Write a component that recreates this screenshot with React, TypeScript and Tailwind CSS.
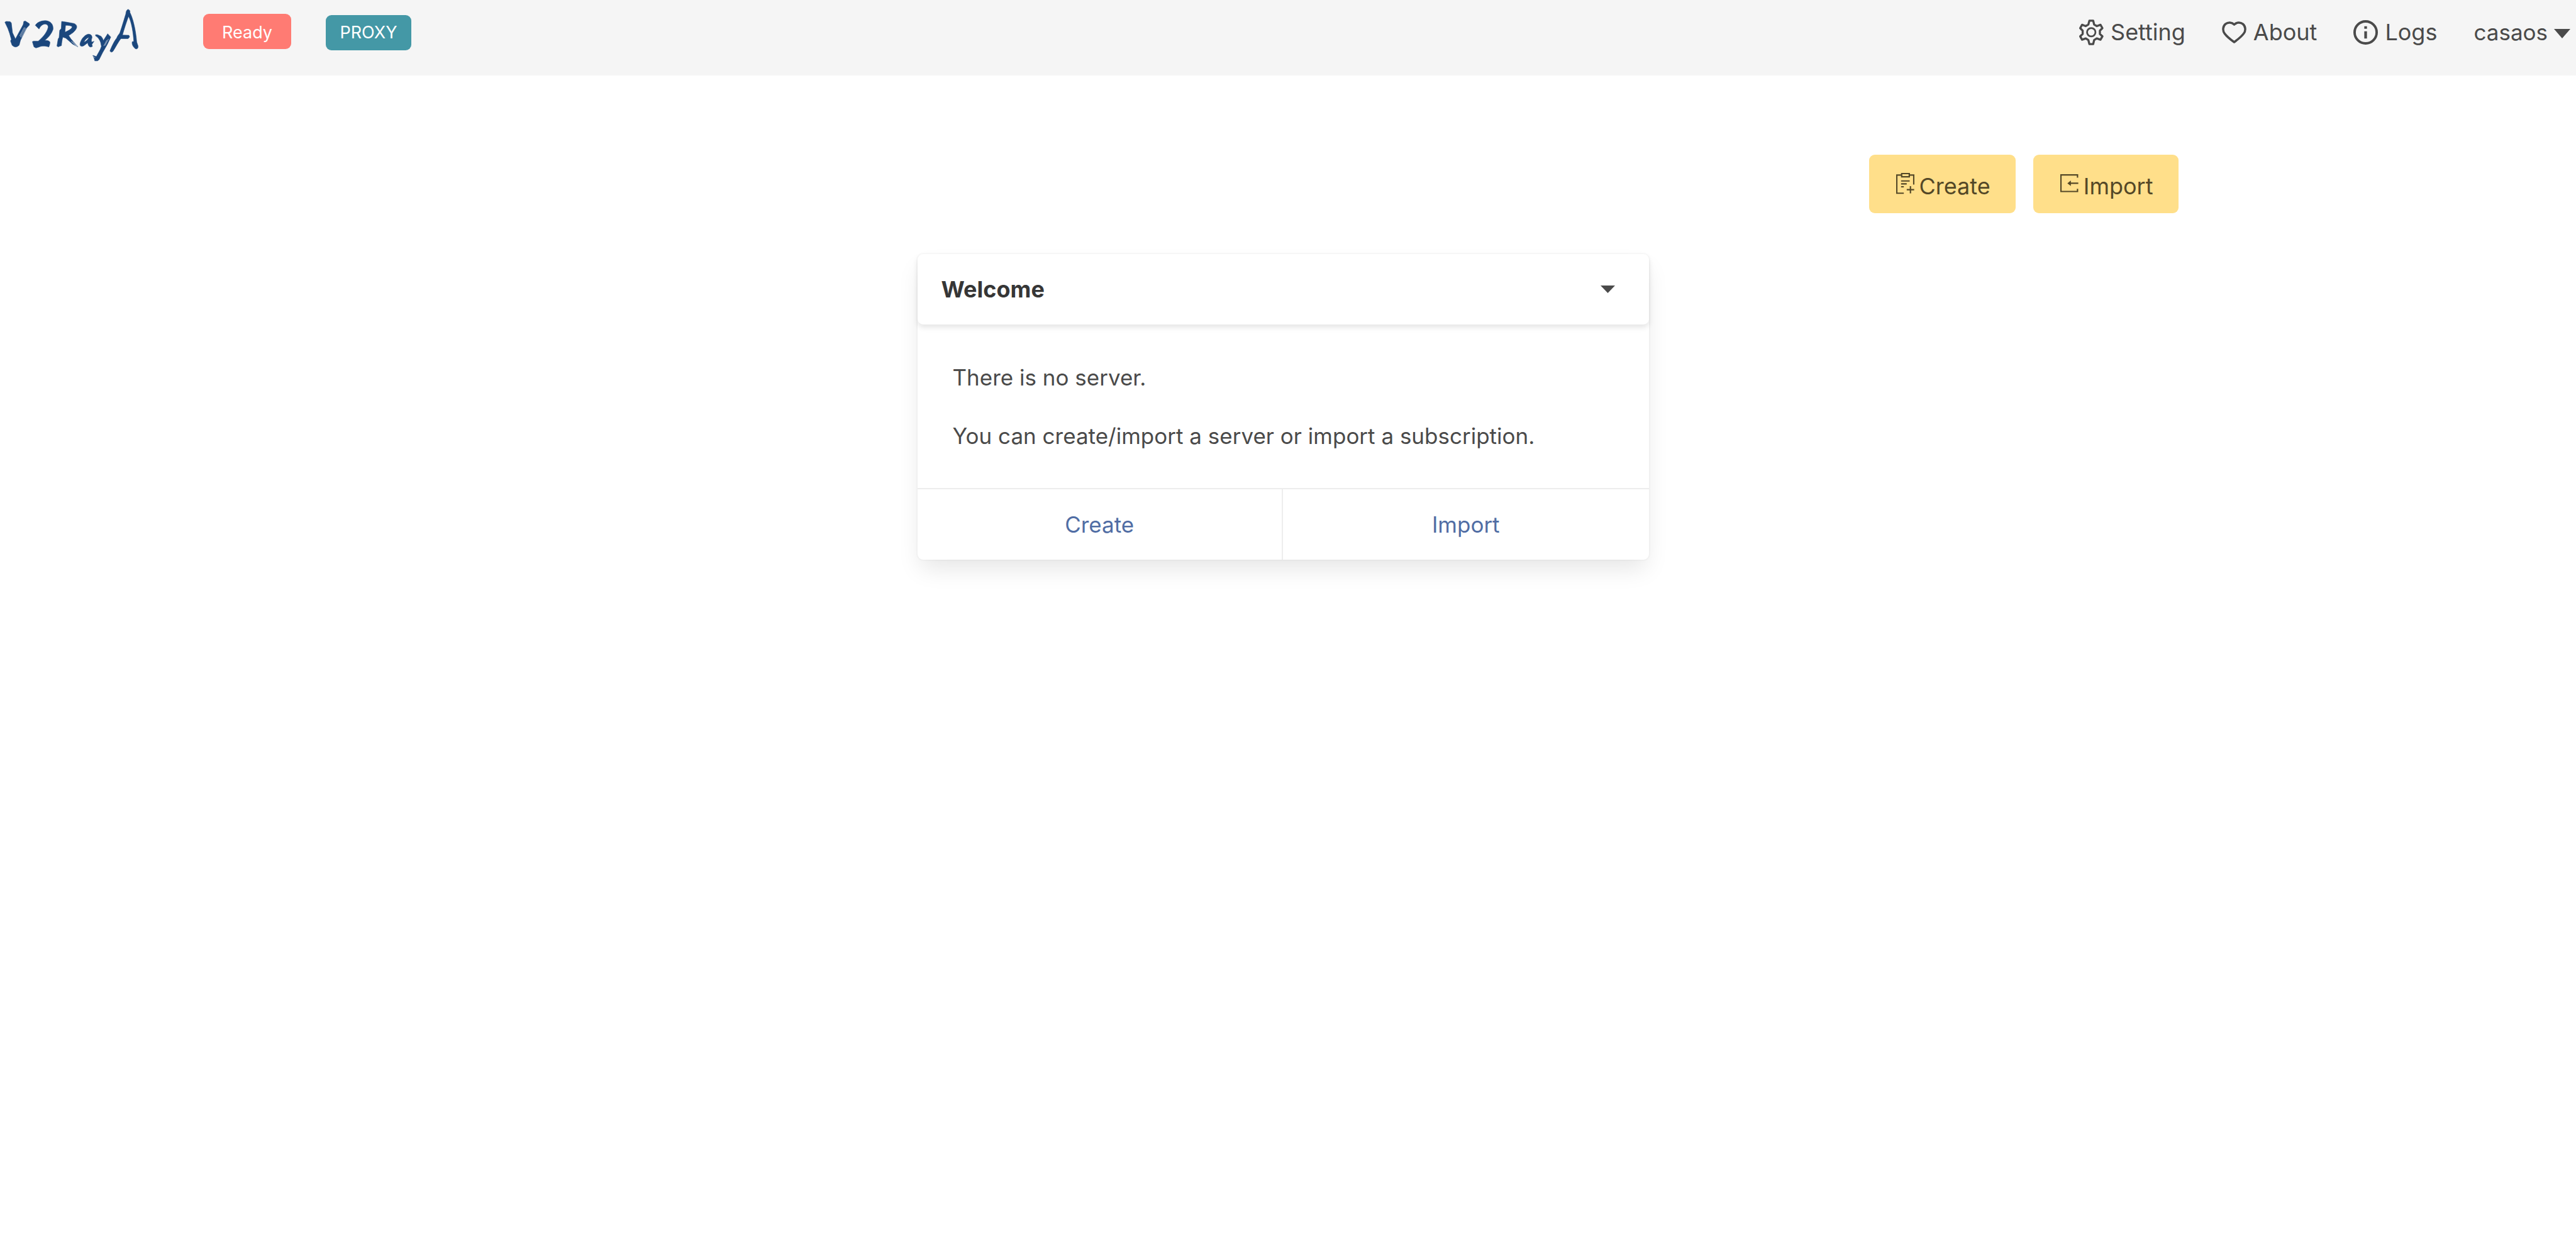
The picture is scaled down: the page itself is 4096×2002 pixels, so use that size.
import type { ReactNode } from "react";

function GearIcon() {
  return (
    <svg viewBox="0 0 42 44" className="h-[41px] w-[39px]" fill="none" stroke="currentColor" strokeWidth="3.6" strokeLinejoin="round" aria-hidden="true">
      <circle cx="20.7" cy="21.7" r="7.2" strokeWidth="3" />
      <path d="M17.5 2 H24 L25.7 8.7 L30.3 11.2 L36.5 9 L39.8 14.7 L35.5 19 V24.7 L39.8 28.8 L36.5 34.5 L30.3 32.3 L25.7 35 L24 42 H17.5 L15.7 35 L11.1 32.3 L5 34.5 L1.8 28.8 L6 24.7 V19 L1.8 14.7 L5 9 L11.1 11.2 L15.7 8.7 Z" />
    </svg>
  );
}

function HeartIcon() {
  return (
    <svg viewBox="0 0 42 38" className="h-[35px] w-[39px]" fill="none" stroke="currentColor" strokeWidth="3.8" strokeLinejoin="round" aria-hidden="true">
      <path d="M21 5.5 C17 1.5 10.5 .8 6 4.5 C1 9 .8 16 4.5 21 C8.5 26.5 15 31.5 21 35.8 C27 31.5 33.5 26.5 37.5 21 C41.2 16 41 9 36 4.5 C31.5 .8 25 1.5 21 5.5 Z" />
    </svg>
  );
}

function InfoIcon() {
  return (
    <svg viewBox="0 0 42 42" className="size-[39px]" aria-hidden="true">
      <circle cx="21" cy="21" r="18.9" fill="none" stroke="currentColor" strokeWidth="4.2" />
      <path fill="currentColor" d="M18.7 10.5h4.6v4.4h-4.6zM18.7 19h4.6v12.5h-4.6z" />
    </svg>
  );
}

function CreateIcon() {
  return (
    <svg viewBox="53 43 93 116" className="h-9 w-[29px] shrink-0" fill="none" stroke="currentColor" strokeWidth="7" aria-hidden="true">
      <path d="M81 46h39v17h-39zM78 54H56v93h36M122 54h21v49" />
      <path d="M78 84h44M78 99h29M78 114h14M126 111v37M107 129h38" />
    </svg>
  );
}

function ImportIcon() {
  return (
    <svg viewBox="50 43 93 116" className="h-9 w-[29px] shrink-0" fill="none" stroke="currentColor" strokeWidth="7" aria-hidden="true">
      <path d="M138 67V53H53v85h85v-14M100 96h42" />
      <path d="M86 96l18-14v28z" fill="currentColor" stroke="none" />
    </svg>
  );
}

function Caret({ className }: { className: string }) {
  return (
    <svg viewBox="0 0 26 15" preserveAspectRatio="none" className={className} fill="currentColor" aria-hidden="true">
      <path d="M0 0h26L13 15z" />
    </svg>
  );
}

/* Hand-brushed product mark with a few dry-brush streaks. */
function Logo() {
  return (
    <svg viewBox="0 0 719 387" className="h-[120px] w-[223px]" role="img" aria-label="v2rayA">
      <g fill="#1b477d" stroke="#1b477d" strokeWidth="2" strokeLinejoin="round" fillRule="evenodd">
        <path d="M25 114 L32 110 L52 111 L58 118 L64 168 L79 200 L119 126 L122 110 L130 108 L150 121 L151 128 L137 143 L105 206 L98 232 Q88 241 80 241 Q70 240 62 232 L54 210 L58 202 Q50 170 40 145 Z" />
        <path d="M181 130 C190 115 210 106 232 106 C258 107 274 124 272 150 C264 175 245 195 228 208 C240 206 252 208 256 216 C256 226 253 235 250 241 C235 235 215 234 200 241 L184 246 L174 240 L166 214 L172 211 L196 211 C215 195 240 170 247 140 C248 126 235 122 225 124 C212 128 205 138 200 149 Z" />
        <path d="M316 110 L338 113 L372 119 C390 121 395 132 393 142 C388 158 370 172 352 182 Q362 200 380 218 L399 240 L372 226 L338 196 L322 190 C318 205 316 220 315 234 L298 240 L292 236 L298 200 L303 192 L306 156 L314 146 Z M336 130 L333 165 C350 158 368 148 370 138 C366 131 350 130 336 130 Z" />
        <path d="M470 183 C466 176 455 173 446 177 C428 185 414 205 410 226 C410 240 422 240 433 232 L450 219 C451 232 458 242 466 241 L474 238 L471 228 L482 212 L470 216 Q466 208 472 192 Z M430 217 C436 204 446 194 456 192 C452 202 442 212 430 217 Z" />
        <path d="M490 178 L500 178 L518 186 Q526 194 530 208 L548 180 L552 173 L568 190 L550 228 L526 270 L508 306 L500 312 L486 312 L483 300 L476 284 L494 290 C502 274 514 258 520 238 L516 218 C512 205 502 190 490 184 Z" />
        <path d="M657 48 C664 50 668 56 666 64 C680 90 696 150 701 216 L708 236 C709 250 700 254 692 248 C682 240 675 226 678 214 L686 213 C684 170 674 110 659 84 C650 108 636 150 628 180 L660 181 C667 186 664 194 656 198 L620 198 C608 212 594 240 580 262 C574 270 565 268 564 260 C572 240 586 210 598 196 C602 184 610 176 614 170 C628 130 636 100 645 72 C646 58 650 50 657 48 Z" />
      </g>
      <g stroke="#f5f5f5" strokeWidth="2" fill="none">
        <path d="M130 142L104 190M125 140L101 184M134 146L110 192M365 212L392 236M372 212L396 238M556 200L538 234M548 206L532 236M476 289L488 296" />
      </g>
    </svg>
  );
}

function NavItem({ icon, label }: { icon: ReactNode; label: string }) {
  return (
    <a href="#" className="flex items-center gap-[11px] text-[36px]">
      {icon}
      <span>{label}</span>
    </a>
  );
}

function ActionButton({ icon, label }: { icon: ReactNode; label: string }) {
  return (
    <button type="button" className="flex h-[93px] items-center gap-2 rounded-[9px] bg-[#ffdf8a] pr-10 pl-[43px] text-[36px] text-[#544827]">
      {icon}
      <span className="pt-1.5">{label}</span>
    </button>
  );
}

export default function App() {
  return (
    <div className="min-h-screen bg-white font-[Inter,sans-serif] text-[35px] leading-[56px] text-[#4a4a4a]">
      <nav className="flex h-[120px] items-start justify-between bg-[#f5f5f5]">
        <div className="flex items-start text-[27px] text-white">
          <a href="#" className="mr-[100px]">
            <Logo />
          </a>
          <button type="button" className="mt-[22px] h-14 w-[140px] rounded-[9px] bg-[#ff7b73] pt-0.5">
            Ready
          </button>
          <button type="button" className="mt-6 ml-[55px] h-14 w-[136px] rounded-[9px] bg-[#4498a6]">
            PROXY
          </button>
        </div>
        <div className="flex items-center gap-[58px] pt-[23px] pr-[9px]">
          <NavItem icon={<GearIcon />} label="Setting" />
          <NavItem icon={<HeartIcon />} label="About" />
          <NavItem icon={<InfoIcon />} label="Logs" />
          <button type="button" className="flex items-center gap-2.5">
            casaos
            <Caret className="mt-1 h-[15px] w-[26px]" />
          </button>
        </div>
      </nav>

      <main className="pt-[126px] pr-4">
        <div className="mx-auto flex w-full max-w-[2847px] justify-end gap-7">
          <ActionButton icon={<CreateIcon />} label="Create" />
          <ActionButton icon={<ImportIcon />} label="Import" />
        </div>

        <section className="mx-auto mt-[65px] w-full max-w-[1163px] rounded-[9px] bg-white shadow-[0_19px_37px_-5px_rgba(10,10,10,0.1),0_0_0_2px_rgba(10,10,10,0.02)]">
          <header className="flex h-28 items-center justify-between rounded-[9px] pr-[54px] pl-[38px] text-[#363636] shadow-[0_5px_9px_rgba(10,10,10,0.1)]">
            <h2 className="text-[36px] font-bold">Welcome</h2>
            <button type="button" aria-label="Collapse" className="text-[#4a4a4a]">
              <Caret className="h-3 w-[23px]" />
            </button>
          </header>
          <div className="px-14 pt-14 pb-[55px]">
            <p>There is no server.</p>
            <p className="mt-[37px]">You can create/import a server or import a subscription.</p>
          </div>
          <footer className="grid h-[114px] grid-cols-2 border-t-2 border-[#ededed] text-[#506da4]">
            <a href="#" className="flex items-center justify-center border-r-2 border-[#ededed]">
              Create
            </a>
            <a href="#" className="flex items-center justify-center">
              Import
            </a>
          </footer>
        </section>
      </main>
    </div>
  );
}
